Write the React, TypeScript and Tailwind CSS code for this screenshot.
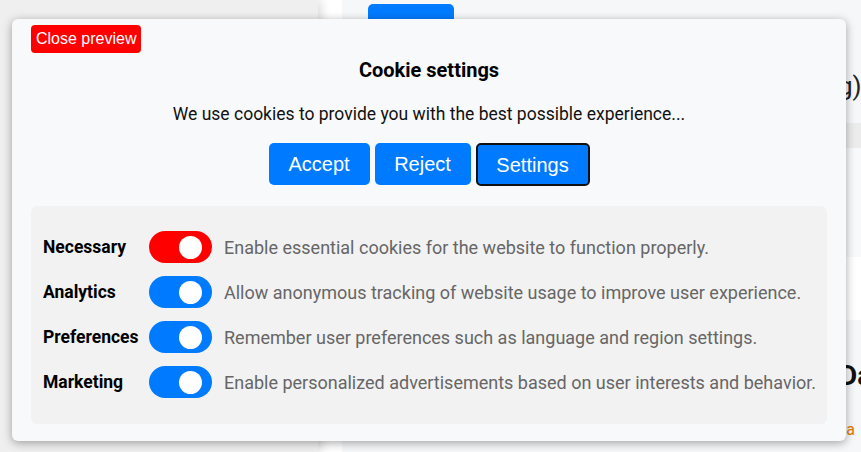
import React from "react";

const rows = [
  { label: "Necessary", desc: "Enable essential cookies for the website to function properly.", color: "bg-[#ff0000]" },
  { label: "Analytics", desc: "Allow anonymous tracking of website usage to improve user experience.", color: "bg-[#007bff]" },
  { label: "Preferences", desc: "Remember user preferences such as language and region settings.", color: "bg-[#007bff]" },
  { label: "Marketing", desc: "Enable personalized advertisements based on user interests and behavior.", color: "bg-[#007bff]" },
];

export default function App() {
  return (
    <div className="relative w-[861px] h-[452px] overflow-hidden bg-[#f6f7f9] font-['Roboto',sans-serif]">
      {/* background page */}
      <div className="flex h-full">
        <div className="w-[318px] shrink-0 h-full bg-[#efefef] shadow-[3px_0_10px_rgba(0,0,0,0.15)] z-10" />
        <div className="w-[24px] shrink-0 h-full bg-white" />
        <div className="flex-1 min-w-0 flex h-full">
          <div className="flex-1 min-w-0 flex flex-col">
            <div className="pl-[26px] pt-[4px]">
              <div className="w-[86px] h-[30px] rounded-[5px] bg-[#007bff]" />
            </div>
            <div className="mt-[89px] h-[25px] bg-[#ececec]" />
            <div className="mt-[24px] h-px bg-[#e6e6e6]" />
          </div>
          <div className="w-[23px] shrink-0 flex flex-col overflow-hidden">
            <div className="h-[123px] shrink-0 pt-[71px]">
              <div className="text-right text-[26px] leading-[30px] text-[#222] whitespace-nowrap">g)</div>
            </div>
            <div className="h-[25px] shrink-0 bg-[#ececec]" />
            <div className="h-[109px] shrink-0 bg-[#f8f9fa]" />
            <div className="h-[63px] shrink-0 bg-white" />
            <div className="mt-[40px] pl-[1px] text-[28px] font-bold leading-[32px] text-[#111] whitespace-nowrap">Da</div>
            <div className="mt-[28px] pl-[3px] text-[16px] leading-[20px] whitespace-nowrap text-[#333]">
              t<span className="text-[#e07b00]">a</span>
            </div>
          </div>
        </div>
      </div>

      {/* modal */}
      <div className="absolute left-[12px] top-[19px] w-[834px] h-[422px] rounded-[6px] bg-[#f8f9fa] shadow-[0_2px_10px_rgba(0,0,0,0.35)] px-[19px] pt-[39px] flex flex-col items-center z-20">
        <button className="absolute left-[19px] top-[6px] h-[28px] px-[5px] rounded-[4px] bg-[#ff0000] text-white text-[16px] leading-[28px] font-['Liberation_Sans',Arial,sans-serif]">
          Close preview
        </button>
        <h2 className="text-[20px] font-bold leading-[24px] text-black">Cookie settings</h2>
        <p className="mt-[22px] text-[17.5px] leading-[21px] text-[#111]">
          We use cookies to provide you with the best possible experience...
        </p>
        <div className="mt-[18px] flex gap-[5px] font-['Liberation_Sans',Arial,sans-serif]">
          <button className="h-[42px] w-[101px] rounded-[5px] bg-[#007bff] text-white text-[20px]">Accept</button>
          <button className="h-[42px] w-[96px] rounded-[5px] bg-[#007bff] text-white text-[20px]">Reject</button>
          <button className="h-[43px] w-[114px] rounded-[5px] bg-[#007bff] text-white text-[20px] border-2 border-[#111]">Settings</button>
        </div>
        <div className="mt-[20px] self-stretch h-[218px] rounded-[6px] bg-[#f2f2f2] px-[12px] pt-[25px] flex flex-col gap-[13px]">
          {rows.map((r) => (
            <div key={r.label} className="flex items-center h-[32px]">
              <span className="w-[94px] shrink-0 text-[17.5px] font-bold text-black leading-[20px]">{r.label}</span>
              <span className={`ml-[12px] shrink-0 relative w-[63px] h-[32px] rounded-full ${r.color}`}>
                <span className="absolute right-[10px] top-[5px] w-[23px] h-[23px] rounded-full bg-white" />
              </span>
              <span className="ml-[12px] whitespace-nowrap text-[18px] text-[#666] leading-[21px]">{r.desc}</span>
            </div>
          ))}
        </div>
      </div>
    </div>
  );
}
